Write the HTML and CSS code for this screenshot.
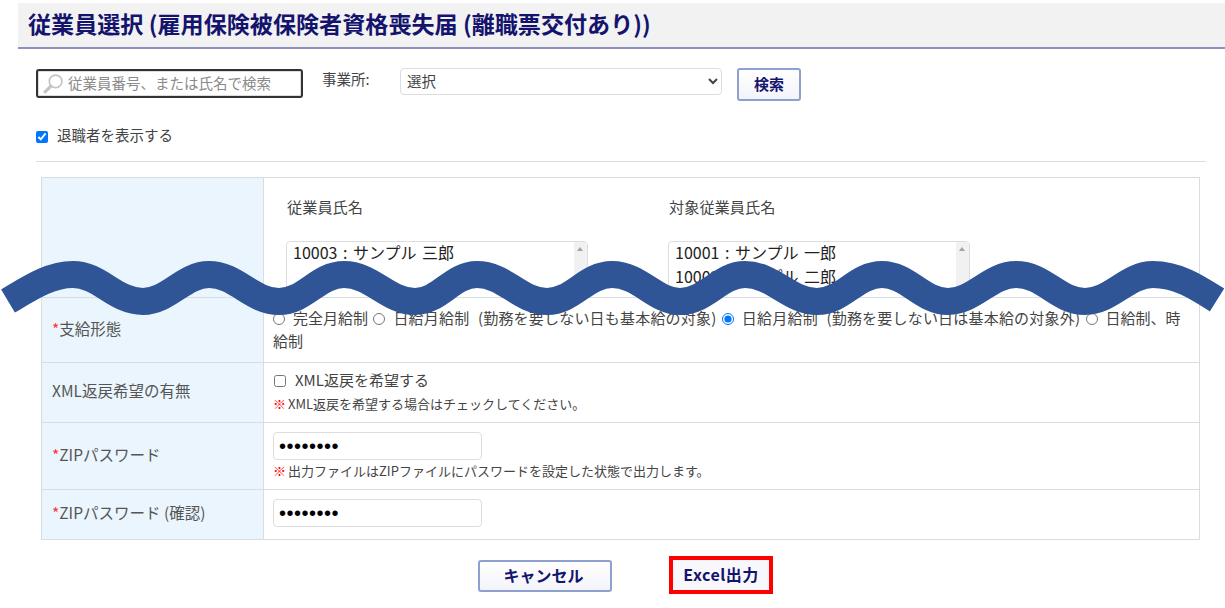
FILE: index.html
```html
<!DOCTYPE html>
<html lang="ja">
<head>
<meta charset="utf-8">
<title>従業員選択</title>
<link rel="stylesheet" href="styles.css">
</head>
<body>
<main class="page">
  <h1 class="title">従業員選択 (雇用保険被保険者資格喪失届 (離職票交付あり))</h1>
  <div class="content">
    <form class="search">
      <div class="search-box">
        <svg class="search-icon" viewBox="0 0 20 20" aria-hidden="true"><circle cx="12" cy="8" r="6" fill="#fff" stroke="#c4c4c4" stroke-width="1.6"/><path d="M7.5 12.5 2 18" stroke="#c4c4c4" stroke-width="3" stroke-linecap="round"/></svg>
        <span class="placeholder">従業員番号、または氏名で検索</span>
      </div>
      <label class="office-label">事業所:</label>
      <select class="office"><option>選択</option></select>
      <button type="button" class="btn btn-search">検索</button>
    </form>
    <label class="retired"><input type="checkbox" checked class="retired-check">退職者を表示する</label>
    <hr class="rule">
    <table class="form-table">
      <tr class="row-names">
        <th></th>
        <td class="names-cell">
          <div class="names">
            <div class="name-col">
              <div class="name-title">従業員氏名</div>
              <div class="listbox"><div class="list-item">10003 : サンプル 三郎</div><span class="scroll"></span></div>
            </div>
            <div class="name-col">
              <div class="name-title">対象従業員氏名</div>
              <div class="listbox"><div class="list-item">10001 : サンプル 一郎</div><div class="list-item">10002 : サンプル 二郎</div><span class="scroll"></span></div>
            </div>
          </div>
        </td>
      </tr>
      <tr class="row-pay">
        <th class="label"><span class="req">*</span>支給形態</th>
        <td class="pay-cell"><input type="radio" name="p" class="radio">完全月給制 <input type="radio" name="p" class="radio"><span class="long">日給月給制 (勤務を要しない日も基本給の対象)</span> <input type="radio" name="p" class="radio" checked><span class="long">日給月給制 (勤務を要しない日は基本給の対象外)</span> <input type="radio" name="p" class="radio">日給制、時<br>給制</td>
      </tr>
      <tr class="row-xml">
        <th class="label">XML返戻希望の有無</th>
        <td class="top-cell">
          <label class="xml"><input type="checkbox" class="xml-check">XML返戻を希望する</label>
          <p class="note note-xml"><span class="mark">※</span>XML返戻を希望する場合はチェックしてください。</p>
        </td>
      </tr>
      <tr class="row-zip">
        <th class="label"><span class="req">*</span>ZIPパスワード</th>
        <td class="pw-cell">
          <input type="password" class="pw" value="password">
          <p class="note"><span class="mark">※</span>出力ファイルはZIPファイルにパスワードを設定した状態で出力します。</p>
        </td>
      </tr>
      <tr class="row-confirm">
        <th class="label"><span class="req">*</span>ZIPパスワード (確認)</th>
        <td class="pw-cell"><input type="password" class="pw" value="password"></td>
      </tr>
    </table>
    <div class="actions">
      <button type="button" class="btn btn-cancel">キャンセル</button>
      <div class="highlight"><button type="button" class="btn btn-excel">Excel出力</button></div>
    </div>
  </div>
  <svg class="wave" viewBox="0 0 1225 608" aria-hidden="true"><path d="M8 301C30 288 50 274.5 73 274.5C100 274.5 115 301.5 143 301.5C168 301.5 184 274.5 209 274.5C236 274.5 252 301.5 279 301.5C305 301.5 318 274.5 344 274.5C372 274.5 388 301.5 415 301.5C440 301.5 452 274.5 477 274.5C505 274.5 520 301.5 547 301.5C573 301.5 586 274.5 612 274.5C640 274.5 655 301.5 680 301.5C706 301.5 720 274.5 745 274.5C773 274.5 790 301.5 817 301.5C843 301.5 856 274.5 882 274.5C908 274.5 922 301.5 948 301.5C974 301.5 990 274.5 1016 274.5C1044 274.5 1058 301.5 1085 301.5C1111 301.5 1127 274.5 1153 274.5C1178 274.5 1198 288 1217 300" fill="none" stroke="#2f5597" stroke-width="27"/></svg>
</main>
</body>
</html>
```
FILE: styles.css
```css
* { box-sizing: border-box; }
html, body { margin: 0; padding: 0; background: #fff; }
body {
  font-family: "Noto Sans CJK JP", "Liberation Sans", sans-serif;
  font-size: 14.5px;
  color: #444;
  overflow: hidden;
}
.page { position: relative; width: 1225px; height: 608px; padding-top: 3px; overflow: hidden; }
.title {
  margin: 0 0 0 18px;
  height: 46px;
  padding-left: 10px;
  background: #f2f2f2;
  border-bottom: 2px solid #8f8fc0;
  color: #14146e;
  font-size: 23.1px;
  line-height: 40px;
  font-weight: 700;
  white-space: nowrap;
}
.content { padding: 19px 19px 0 36px; }
.search { display: flex; align-items: flex-start; height: 33px; }
.search-box {
  display: flex;
  align-items: center;
  width: 267px;
  height: 29px;
  margin-top: 1px;
  padding: 0 0 3px 5px;
  border: 2px solid #333;
  border-radius: 3px;
  box-shadow: inset 0 0 0 1px #ddd;
}
.search-icon { width: 21px; height: 21px; margin: 3px 4px 0 0; flex: none; }
.placeholder { color: #8a8a8a; white-space: nowrap; }
.office-label { margin-left: 19px; width: 78px; line-height: 21px; font-size: 14.5px; }
.office {
  width: 322px;
  height: 27px;
  padding: 0 0 4px 2px;
  border: 1px solid #ddd;
  border-radius: 4px;
  background: #fff;
  color: #444;
  font: inherit;
}
.btn {
  border: 2px solid #8f9fd0;
  border-radius: 3px;
  background: linear-gradient(#fff, #f3f4fa);
  color: #14146e;
  font-family: inherit;
  font-weight: 700;
  padding: 0 0 2px;
}
.btn-search { width: 64px; height: 33px; margin-left: 15px; font-size: 15px; }
.retired { display: flex; align-items: center; margin-top: 23px; height: 20px; }
.retired-check { width: 12px; height: 12px; margin: 5px 9px 0 0; accent-color: #0075ff; }
.rule { margin: 17px 0 15px; border: 0; border-top: 1px solid #ddd; width: 1170px; }
.form-table {
  width: 1159px;
  margin-left: 5px;
  border-collapse: collapse;
  table-layout: fixed;
}
.form-table th, .form-table td { border: 1px solid #d8dde2; padding: 0; vertical-align: middle; }
.form-table th {
  width: 222px;
  padding-left: 10px;
  background: #ebf5fd;
  font-weight: 400;
  text-align: left;
  color: #555;
  font-size: 15.5px;
}
.form-table .label { padding: 0 0 5px 10px; }
.form-table td { padding-left: 9px; }
.req { color: #f33; }
.row-names { height: 120px; }
.row-pay { height: 65px; }
.row-xml { height: 60px; }
.row-zip { height: 67px; }
.row-confirm { height: 50px; }
.form-table .names-cell { padding: 0 0 0 22px; vertical-align: top; }
.names { display: flex; height: 119px; overflow: hidden; }
.name-col { width: 382px; }
.name-title { margin-top: 16px; padding-left: 1px; line-height: 24px; color: #444; font-size: 15.2px; }
.listbox {
  position: relative;
  width: 302px;
  height: 100px;
  margin-top: 23px;
  padding: 0 6px;
  border: 1px solid #ddd;
  border-radius: 4px;
  color: #222;
  font-size: 16px;
}
.list-item { line-height: 24px; word-spacing: 2px; }
.list-item:first-child { margin-top: -2px; }
.scroll { position: absolute; top: 0; right: 0; width: 13px; height: 100%; background: #f1f1f1; }
.scroll::before {
  content: "";
  position: absolute;
  top: 5px;
  left: 3px;
  border: 3.5px solid transparent;
  border-top: 0;
  border-bottom: 4px solid #a3a3a3;
}
.form-table .pay-cell { font-size: 15px; line-height: 23px; padding: 8px 10px 0 9px; vertical-align: top; }
.long { letter-spacing: 0.2px; word-spacing: 5px; }
.radio { width: 12px; height: 12px; margin: 0 8px 0 0; vertical-align: -1px; accent-color: #0075ff; }
.radio:not(:first-child) { margin-left: 2px; }
.form-table .top-cell { padding-top: 6px; vertical-align: top; font-size: 15px; }
.xml { display: flex; align-items: center; height: 20px; }
.xml-check { width: 12px; height: 12px; margin: 4px 9px 0 1px; }
.note { margin: 2px 0 0; font-size: 13px; line-height: 18px; color: #444; white-space: nowrap; }
.note-xml { margin-top: 6px; }
.mark { margin-right: 2px; color: #f00; font-weight: 700; }
.form-table .pw-cell { padding-top: 9px; vertical-align: top; }
.pw {
  display: block;
  width: 209px;
  height: 28px;
  padding: 0 5px;
  border: 1px solid #ddd;
  border-radius: 4px;
  color: #000;
  font-size: 20px;
  letter-spacing: 0.5px;
}
.actions { display: flex; align-items: center; margin: 16px 0 0 442px; }
.btn-cancel { width: 134px; height: 32px; margin-top: 2px; padding-right: 3px; font-size: 16px; }
.highlight { margin-left: 57px; border: 4px solid #f00; }
.btn-excel { display: block; width: 96px; height: 30px; border: 0; background: #f8f8fc; font-size: 16px; letter-spacing: 0.5px; }
.wave { position: absolute; left: 0; top: 0; width: 1225px; height: 608px; pointer-events: none; }
```
